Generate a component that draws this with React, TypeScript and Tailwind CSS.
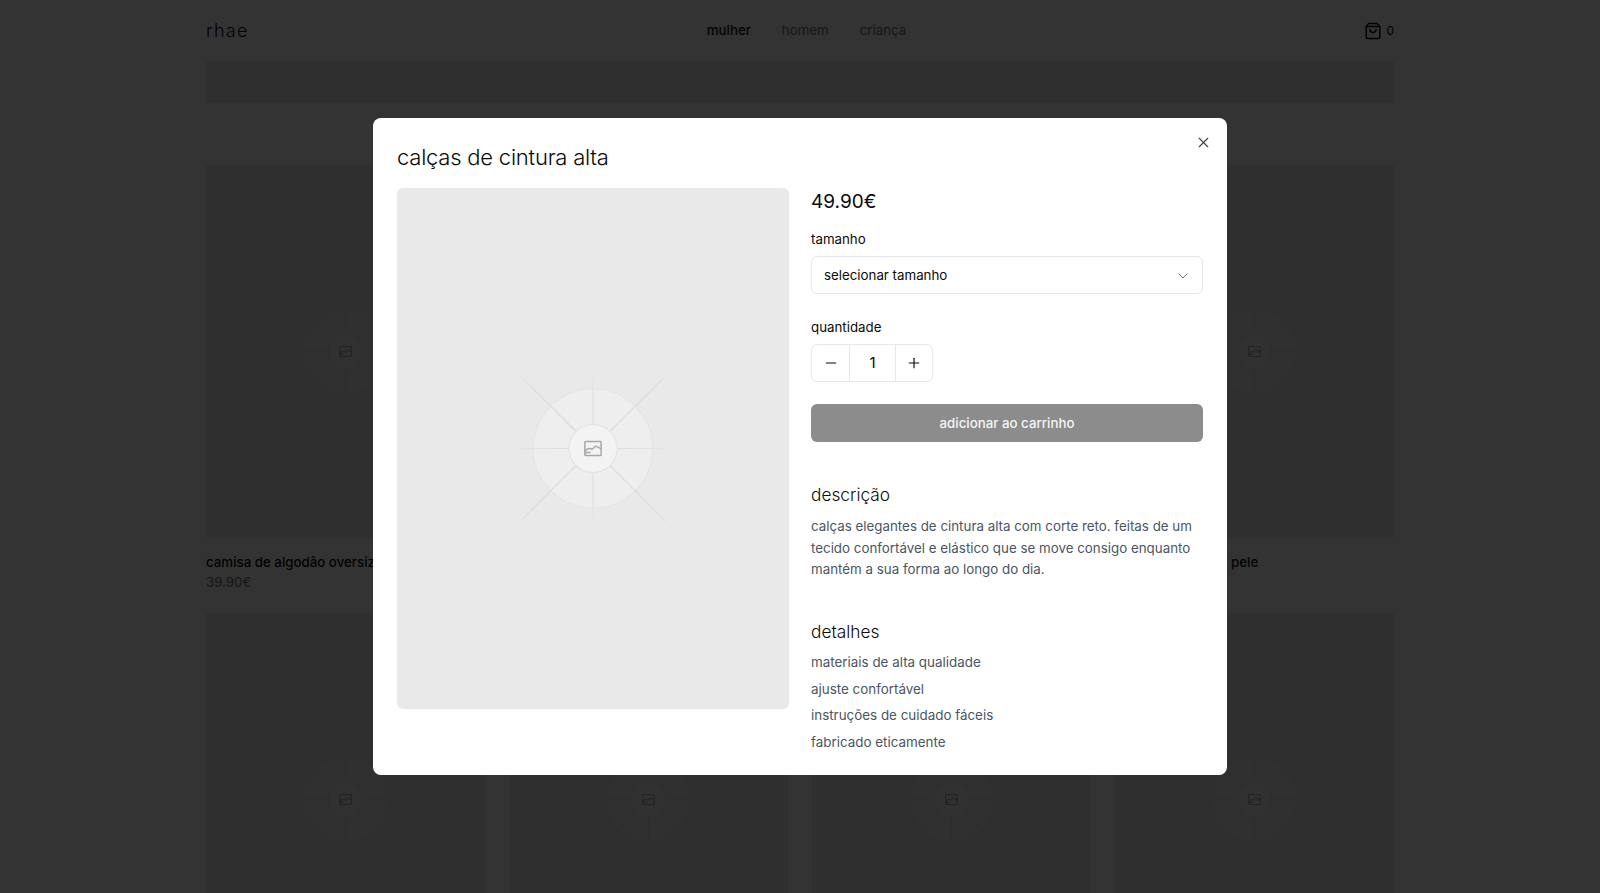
import { ChevronDown, Minus, Plus, ShoppingBag, X } from "lucide-react";

function Placeholder() {
  const straight = [
    [195.5, 261, 195.5, 181],
    [195.5, 261, 195.5, 341],
    [195.5, 261, 115.5, 261],
    [195.5, 261, 275.5, 261],
  ];
  const diagonal = [
    [195.5, 261, 115.5, 181],
    [195.5, 261, 275.5, 181],
    [195.5, 261, 115.5, 341],
    [195.5, 261, 275.5, 341],
  ];
  return (
    <svg viewBox="0 0 391 522" className="block h-full w-full" preserveAspectRatio="xMidYMid slice">
      <defs>
        <radialGradient id="phs" gradientUnits="userSpaceOnUse" cx="195.5" cy="261" r="80">
          <stop offset="0" stopColor="#dcdcdc" />
          <stop offset="0.7" stopColor="#e0e0e0" />
          <stop offset="1" stopColor="#e9e9e9" />
        </radialGradient>
        <radialGradient id="phd" gradientUnits="userSpaceOnUse" cx="195.5" cy="261" r="114">
          <stop offset="0" stopColor="#dadada" />
          <stop offset="0.75" stopColor="#dddddd" />
          <stop offset="1" stopColor="#e9e9e9" />
        </radialGradient>
      </defs>
      <circle cx="195.5" cy="261" r="59.5" fill="#fff" fillOpacity="0.25" stroke="#e4e4e4" strokeWidth="1" />
      {straight.map((r, i) => (
        <line key={i} x1={r[0]} y1={r[1]} x2={r[2]} y2={r[3]} stroke="url(#phs)" strokeWidth="1.2" />
      ))}
      {diagonal.map((r, i) => (
        <line key={i} x1={r[0]} y1={r[1]} x2={r[2]} y2={r[3]} stroke="url(#phd)" strokeWidth="1.2" />
      ))}
      <circle cx="195.5" cy="261" r="24" fill="#f3f3f3" stroke="#e4e4e4" strokeWidth="1.2" />
      <g fill="none" stroke="#a8a8a8" strokeWidth="1.5" strokeLinejoin="round" strokeLinecap="round">
        <rect x="187.4" y="254" width="16.2" height="14" rx="0.8" />
        <path d="M187.6 263.8c1.6-2.4 3.4-3.4 5-2.6 1.6.8 2.6.6 3.6-.8 1-1.5 2.2-2.1 3.3-1.2 1 .8 2.2 1.6 3.9 1.7" />
        <path d="M187.6 266.4c1.6-1.6 3.4-2.1 5-1.3" />
      </g>
    </svg>
  );
}

function Card({ name, price }: { name: string; price: string }) {
  return (
    <div className="flex flex-col">
      <div className="h-[373px] overflow-hidden rounded-[2px] bg-[#e9e9e9]">
        <Placeholder />
      </div>
      <p className="mt-[14px] h-[21px] text-[13.3px] leading-5 font-medium text-[#0a0a0a]">{name}</p>
      <p className="text-[13.3px] leading-[18px] text-[#6b7280]">{price}</p>
    </div>
  );
}

const products = [
  ["camisa de algodão oversize", "39.90€"],
  ["calças de cintura alta", "49.90€"],
  ["vestido de linho", "59.90€"],
  ["botas de salto em pele", "89.90€"],
  ["camisola de malha", "44.90€"],
  ["saia plissada", "39.90€"],
  ["blazer estruturado", "79.90€"],
  ["mala de ombro", "69.90€"],
];

export default function App() {
  return (
    <div className="relative h-[893px] w-full overflow-hidden bg-white font-['Inter',sans-serif] text-[#0a0a0a]">
      <div className="mx-auto w-[1188px]">
        <header className="flex h-[61px] items-center justify-between">
          <span className="text-lg font-light tracking-[0.07em]">rhae</span>
          <nav className="flex items-center gap-[31px] pt-px text-[13.3px]">
            <span className="font-medium">mulher</span>
            <span className="text-[#6b7280]">homem</span>
            <span className="text-[#6b7280]">criança</span>
          </nav>
          <div className="flex items-center gap-1">
            <ShoppingBag size={18} strokeWidth={2} />
            <span className="text-xs">0</span>
          </div>
        </header>
        <div className="h-[42px] rounded-[2px] bg-[#ebebeb]" />
        <main className="mt-[62px] grid grid-cols-4 gap-x-6 gap-y-[22px]">
          {products.map(([n, p]) => (
            <Card key={n} name={n} price={p} />
          ))}
        </main>
      </div>

      <div className="absolute inset-0 bg-black/80" />

      <div className="absolute top-[118px] left-[373px] h-[657px] w-[854px] rounded-lg bg-white p-6">
        <button className="absolute top-[15.5px] right-[15.5px] text-[#3f3f46]">
          <X size={17} strokeWidth={1.5} />
        </button>
        <h2 className="text-[22px] leading-[30px] font-light tracking-[-0.01em]">calças de cintura alta</h2>
        <div className="mt-[15px] grid grid-cols-[392px_392px] gap-[22px]">
          <div className="mt-px h-[521px] overflow-hidden rounded-md bg-[#e9e9e9]">
            <Placeholder />
          </div>
          <div className="flex flex-col">
            <p className="pt-px text-[19px] leading-7">49.90€</p>
            <label className="mt-[13px] text-[13.3px] leading-5">tamanho</label>
            <div className="mt-[7px] flex h-[38px] items-center justify-between rounded-md border border-[#e5e7eb] pt-px pr-[11px] pl-3 text-[13.3px]">
              <span>selecionar tamanho</span>
              <ChevronDown size={16} strokeWidth={1.5} className="text-[#6b7280]" />
            </div>
            <label className="mt-[23px] text-[13.3px] leading-5">quantidade</label>
            <div className="mt-[7px] flex h-[38px] w-[122px] items-stretch rounded-md border border-[#e5e7eb]">
              <div className="flex w-[37px] items-center justify-center">
                <Minus size={16} strokeWidth={1.75} />
              </div>
              <div className="flex w-[47px] items-center justify-center border-x border-[#e5e7eb] text-[15px]">1</div>
              <div className="flex flex-1 items-center justify-center">
                <Plus size={16} strokeWidth={1.75} />
              </div>
            </div>
            <button className="mt-[22px] h-[38px] rounded-md bg-[#8c8c8d] pt-[2px] text-[13.3px] font-medium text-[#f5f5f5]">
              adicionar ao carrinho
            </button>
            <h3 className="mt-[39px] text-[17.3px] leading-7 font-light">descrição</h3>
            <p className="mt-[7px] text-[13.35px] leading-[21.5px] text-[#4b5563]">
              calças elegantes de cintura alta com corte reto. feitas de um tecido confortável e elástico que se move
              consigo enquanto mantém a sua forma ao longo do dia.
            </p>
            <h3 className="mt-[37px] text-[17.3px] leading-7 font-light">detalhes</h3>
            <ul className="mt-[6.4px] flex flex-col gap-[6.67px] text-[13.4px] leading-5 text-[#4b5563]">
              <li>materiais de alta qualidade</li>
              <li>ajuste confortável</li>
              <li>instruções de cuidado fáceis</li>
              <li>fabricado eticamente</li>
            </ul>
          </div>
        </div>
      </div>
    </div>
  );
}
